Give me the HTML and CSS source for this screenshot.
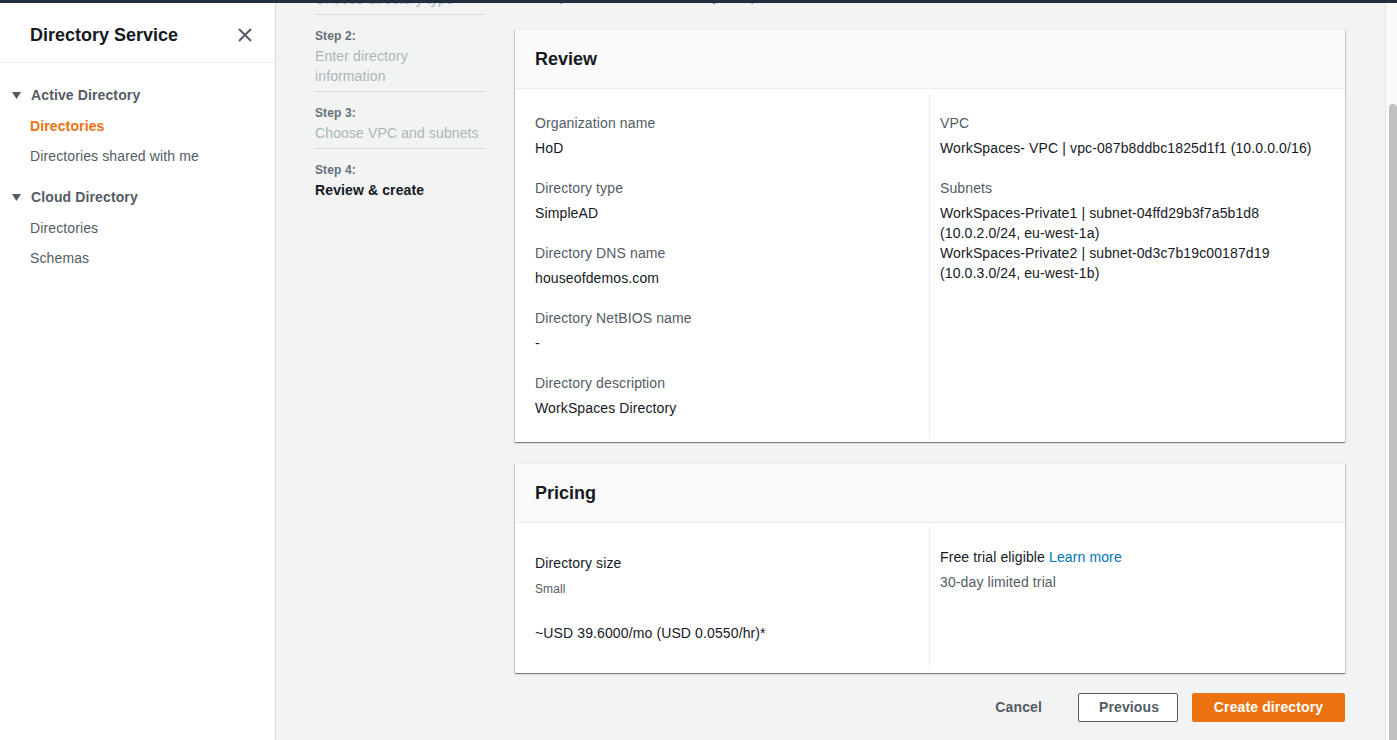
FILE: index.html
```html
<!DOCTYPE html>
<html lang="en">
<head>
<meta charset="utf-8">
<title>Directory Service - Review &amp; create</title>
<link rel="stylesheet" href="styles.css">
</head>
<body>
<div class="topbar"></div>
<div class="layout">
  <aside class="sidebar">
    <div class="side-head">
      <h2 class="side-title">Directory Service</h2>
      <span class="close" aria-label="Close">
        <svg width="14" height="14" viewBox="0 0 14 14"><path d="M1 1 L13 13 M13 1 L1 13" stroke="#545b64" stroke-width="2" fill="none"/></svg>
      </span>
    </div>
    <nav class="side-nav">
      <div class="section">
        <div class="sec-title"><svg class="caret" width="9" height="7" viewBox="0 0 9 7"><path d="M0 0 H9 L4.5 7 Z" fill="#545b64"/></svg>Active Directory</div>
        <ul class="items">
          <li class="active">Directories</li>
          <li>Directories shared with me</li>
        </ul>
      </div>
      <div class="section">
        <div class="sec-title"><svg class="caret" width="9" height="7" viewBox="0 0 9 7"><path d="M0 0 H9 L4.5 7 Z" fill="#545b64"/></svg>Cloud Directory</div>
        <ul class="items">
          <li>Directories</li>
          <li>Schemas</li>
        </ul>
      </div>
    </nav>
  </aside>

  <main class="main">
    <div class="content">
      <ol class="steps">
        <li class="step"><span class="step-num">Step 1:</span><span class="step-name">Choose directory type</span></li>
        <li class="step"><span class="step-num">Step 2:</span><span class="step-name">Enter directory information</span></li>
        <li class="step"><span class="step-num">Step 3:</span><span class="step-name">Choose VPC and subnets</span></li>
        <li class="step current"><span class="step-num">Step 4:</span><span class="step-name">Review &amp; create</span></li>
      </ol>

      <div class="form">
        <p class="intro">Simple AD · Review directory setup</p>

        <section class="panel">
          <div class="panel-head"><h3>Review</h3></div>
          <div class="panel-body">
            <div class="col">
              <div class="field"><div class="label">Organization name</div><div class="value">HoD</div></div>
              <div class="field"><div class="label">Directory type</div><div class="value">SimpleAD</div></div>
              <div class="field"><div class="label">Directory DNS name</div><div class="value">houseofdemos.com</div></div>
              <div class="field"><div class="label">Directory NetBIOS name</div><div class="value">-</div></div>
              <div class="field"><div class="label">Directory description</div><div class="value">WorkSpaces Directory</div></div>
            </div>
            <div class="col divided">
              <div class="field"><div class="label">VPC</div><div class="value">WorkSpaces- VPC | vpc-087b8ddbc1825d1f1 (10.0.0.0/16)</div></div>
              <div class="field"><div class="label">Subnets</div><div class="value">WorkSpaces-Private1 | subnet-04ffd29b3f7a5b1d8<br>(10.0.2.0/24, eu-west-1a)<br>WorkSpaces-Private2 | subnet-0d3c7b19c00187d19<br>(10.0.3.0/24, eu-west-1b)</div></div>
            </div>
          </div>
        </section>

        <section class="panel">
          <div class="panel-head"><h3>Pricing</h3></div>
          <div class="panel-body">
            <div class="col price-col">
              <div class="size-label">Directory size</div>
              <div class="size-desc">Small</div>
              <div class="price">~USD 39.6000/mo (USD 0.0550/hr)*</div>
            </div>
            <div class="col divided">
              <div class="field"><div class="value">Free trial eligible <a class="link" href="#">Learn more</a></div><div class="muted">30-day limited trial</div></div>
            </div>
          </div>
        </section>

        <div class="actions">
          <button class="btn btn-link">Cancel</button>
          <button class="btn btn-normal">Previous</button>
          <button class="btn btn-primary">Create directory</button>
        </div>
      </div>
    </div>
  </main>

  <div class="scrollbar"><div class="thumb"></div></div>
</div>
</body>
</html>
```

FILE: styles.css
```css
* { box-sizing: border-box; }

html, body {
  margin: 0;
  padding: 0;
  height: 740px;
  overflow: hidden;
}

body {
  font-family: "Liberation Sans", Arial, sans-serif;
  font-size: 14px;
  line-height: 20px;
  letter-spacing: 0.12px;
  color: #16191f;
  background: #f2f3f3;
}

.topbar {
  height: 3px;
  background: #232f3e;
}

.layout {
  display: flex;
  height: 737px;
}

/* Sidebar */
.sidebar {
  width: 276px;
  flex: 0 0 276px;
  background: #fff;
  border-right: 1px solid #d5dbdb;
}

.side-head {
  display: flex;
  align-items: center;
  justify-content: space-between;
  padding: 21px 23px 16px 30px;
  border-bottom: 1px solid #eaeded;
}

.side-title {
  margin: 0;
  font-size: 18px;
  line-height: 22px;
  font-weight: 700;
  letter-spacing: 0;
  color: #16191f;
}

.close {
  display: flex;
  width: 14px;
  height: 14px;
}

.side-nav {
  padding-top: 22px;
}

.section + .section {
  margin-top: 16px;
}

.sec-title {
  display: flex;
  align-items: center;
  padding-left: 12px;
  font-weight: 700;
  color: #545b64;
}

.caret {
  margin-right: 10px;
  flex: 0 0 9px;
}

.items {
  list-style: none;
  margin: 6px 0 0;
  padding: 0;
}

.items li {
  padding: 5px 0 5px 30px;
  color: #545b64;
}

.items li.active {
  color: #ec7211;
  font-weight: 700;
}

/* Main */
.main {
  flex: 1 1 auto;
  overflow: hidden;
  background: #f2f3f3;
}

.content {
  display: flex;
  gap: 30px;
  margin-top: -45px;
  padding-left: 39px;
}

.steps {
  list-style: none;
  margin: 0;
  padding: 0;
  width: 170px;
  flex: 0 0 170px;
}

.step {
  display: flex;
  flex-direction: column;
  padding: 13px 0 5px;
  border-bottom: 1px solid #d5dbdb;
}

.step.current {
  border-bottom: none;
}

.step-num {
  font-size: 12px;
  line-height: 16px;
  font-weight: 700;
  color: #687078;
  margin-bottom: 2px;
}

.step-name {
  color: #aab7b8;
  padding-right: 5px;
}

.step.current .step-name {
  color: #16191f;
  font-weight: 700;
}

.form {
  width: 830px;
  flex: 0 0 830px;
}

.intro {
  margin: 28px 0 0 20px;
  color: #687078;
}

.panel {
  background: #fff;
  margin-top: 23px;
  box-shadow: 0 1px 1px 0 rgba(0, 28, 36, 0.3), 1px 1px 1px 0 rgba(0, 28, 36, 0.15), -1px 1px 1px 0 rgba(0, 28, 36, 0.15);
  border-top: 1px solid #eaeded;
}

.panel + .panel {
  margin-top: 21px;
}

.panel-head {
  background: #fafafa;
  padding: 18px 20px 18px;
  border-bottom: 1px solid #eaeded;
}

.panel-head h3 {
  margin: 0;
  font-size: 18px;
  line-height: 22px;
  font-weight: 700;
  letter-spacing: 0;
}

.panel-body {
  display: grid;
  grid-template-columns: 404px 1fr;
  padding: 4px 10px;
}

.col {
  padding: 20px 10px;
}

.col.divided {
  border-left: 1px solid #eaeded;
}

.field + .field {
  margin-top: 20px;
}

.label {
  color: #545b64;
  margin-bottom: 5px;
}

.value {
  color: #16191f;
}

.muted {
  color: #545b64;
  margin-top: 5px;
}

.link {
  color: #0073bb;
  text-decoration: none;
}

.price-col {
  padding-top: 26px;
  padding-bottom: 26px;
}

.size-label {
  color: #16191f;
}

.size-desc {
  font-size: 12px;
  line-height: 16px;
  color: #545b64;
  margin-top: 8px;
}

.price {
  margin-top: 26px;
  color: #16191f;
}

.actions {
  display: flex;
  justify-content: flex-end;
  align-items: center;
  gap: 14px;
  margin-top: 20px;
}

.btn {
  font-family: inherit;
  font-size: 14px;
  line-height: 19px;
  font-weight: 700;
  letter-spacing: 0.12px;
  padding: 4px 20px;
  border: 1px solid transparent;
  border-radius: 2px;
  cursor: pointer;
}

.btn-link {
  background: transparent;
  color: #545b64;
  margin-right: 1px;
}

.btn-normal {
  background: #fff;
  border-color: #545b64;
  color: #545b64;
  width: 100px;
}

.btn-primary {
  background: #ec7211;
  border-color: #ec7211;
  color: #fff;
  width: 153px;
}

/* Scrollbar */
.scrollbar {
  width: 12px;
  flex: 0 0 12px;
  display: flex;
  flex-direction: column;
  background: #fafafa;
  border-left: 1px solid #e3e3e3;
  padding: 101px 0 0 3px;
}

.thumb {
  flex: 1 1 auto;
  background: #c1c1c1;
  border-radius: 4px 4px 0 0;
}
```
